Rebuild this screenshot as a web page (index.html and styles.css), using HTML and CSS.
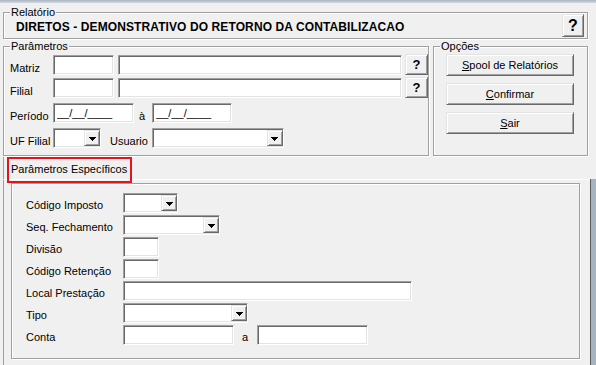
FILE: index.html
```html
<!DOCTYPE html>
<html>
<head>
  <meta charset="utf-8">
  <title>Diretos - Demonstrativo do Retorno da Contabilizacao</title>
  <link rel="stylesheet" href="styles.css">
</head>
<body>
  <div class="frame-top"></div>
  <div class="window">

    <div class="group report">
      <span class="legend">Relatório</span>
      <div class="report-title">DIRETOS - DEMONSTRATIVO DO RETORNO DA CONTABILIZACAO</div>
      <button class="raised help-big">?</button>
    </div>

    <div class="middle">
      <div class="group params">
        <span class="legend">Parâmetros</span>

        <div class="row row-a">
          <span class="lbl">Matriz</span>
          <input class="field w-code" type="text">
          <input class="field w-name" type="text">
          <button class="raised help">?</button>
        </div>

        <div class="row row-b">
          <span class="lbl">Filial</span>
          <input class="field w-code" type="text">
          <input class="field w-name" type="text">
          <button class="raised help">?</button>
        </div>

        <div class="row row-c">
          <span class="lbl">Período</span>
          <input class="field w-date" type="text" value="__/__/____">
          <span class="sep">à</span>
          <input class="field w-date2" type="text" value="__/__/____">
        </div>

        <div class="row row-c">
          <span class="lbl">UF Filial</span>
          <div class="field combo w-uf"><span class="raised combo-btn"><svg width="7" height="4" viewBox="0 0 7 4"><path d="M0 0h7v1h-1v1h-1v1h-1v1h-1v-1h-1v-1h-1v-1h-1z"/></svg></span></div>
          <span class="lbl-inline">Usuario</span>
          <div class="field combo w-user"><span class="raised combo-btn"><svg width="7" height="4" viewBox="0 0 7 4"><path d="M0 0h7v1h-1v1h-1v1h-1v1h-1v-1h-1v-1h-1v-1h-1z"/></svg></span></div>
        </div>
      </div>

      <div class="group options">
        <span class="legend">Opções</span>
        <button class="raised action"><u>S</u>pool de Relatórios</button>
        <button class="raised action"><u>C</u>onfirmar</button>
        <button class="raised action"><u>S</u>air</button>
      </div>
    </div>

    <div class="tabs">
      <div class="tab-strip">
        <div class="tab-label">Parâmetros Específicos</div>
      </div>
      <div class="tab-body">
        <div class="page">
          <div class="group inner">
            <div class="row">
              <span class="lbl">Código Imposto</span>
              <div class="field combo w-imp"><span class="raised combo-btn"><svg width="7" height="4" viewBox="0 0 7 4"><path d="M0 0h7v1h-1v1h-1v1h-1v1h-1v-1h-1v-1h-1v-1h-1z"/></svg></span></div>
            </div>
            <div class="row">
              <span class="lbl">Seq. Fechamento</span>
              <div class="field combo w-seq"><span class="raised combo-btn"><svg width="7" height="4" viewBox="0 0 7 4"><path d="M0 0h7v1h-1v1h-1v1h-1v1h-1v-1h-1v-1h-1v-1h-1z"/></svg></span></div>
            </div>
            <div class="row">
              <span class="lbl">Divisão</span>
              <input class="field w-small" type="text">
            </div>
            <div class="row">
              <span class="lbl">Código Retenção</span>
              <input class="field w-small" type="text">
            </div>
            <div class="row">
              <span class="lbl">Local Prestação</span>
              <input class="field w-local" type="text">
            </div>
            <div class="row">
              <span class="lbl">Tipo</span>
              <div class="field combo w-tipo"><span class="raised combo-btn"><svg width="7" height="4" viewBox="0 0 7 4"><path d="M0 0h7v1h-1v1h-1v1h-1v1h-1v-1h-1v-1h-1v-1h-1z"/></svg></span></div>
            </div>
            <div class="row">
              <span class="lbl">Conta</span>
              <input class="field w-conta" type="text">
              <span class="sep sep-a">a</span>
              <input class="field w-conta" type="text">
            </div>
          </div>
        </div>
        <div class="edge"></div>
      </div>
    </div>

  </div>
</body>
</html>
```

FILE: styles.css
```css
body {
  margin: 0;
  width: 596px;
  height: 365px;
  overflow: hidden;
  background: #f0f0f0;
  color: #000;
  font: 11px "Liberation Sans", Arial, sans-serif;
}

.frame-top {
  height: 3px;
  background: linear-gradient(#a9b4c1, #d3d9e0);
}

.window {
  padding: 9px 0 0 3px;
}

/* etched group box */
.group {
  position: relative;
  box-sizing: border-box;
  border: 1px solid #a0a0a0;
  box-shadow: inset 1px 1px 0 #fff, 1px 1px 0 #fff;
}

.legend {
  position: absolute;
  top: -7px;
  left: 6px;
  padding: 0 1px;
  background: #f0f0f0;
  line-height: 13px;
}

/* 3d bits */
.raised {
  box-sizing: border-box;
  margin: 0;
  padding: 0;
  background: #f0f0f0;
  border: 1px solid;
  border-color: #e3e3e3 #696969 #696969 #e3e3e3;
  box-shadow: inset 1px 1px 0 #fff, inset -1px -1px 0 #a0a0a0;
  font: inherit;
  color: #000;
}

.field {
  box-sizing: border-box;
  height: 20px;
  margin: 0;
  padding: 0 3px;
  background: #fff;
  border: 1px solid;
  border-color: #a0a0a0 #fff #fff #a0a0a0;
  box-shadow: inset 1px 1px 0 #696969, inset -1px -1px 0 #e3e3e3;
  font: inherit;
  color: #000;
  outline: none;
}

.combo {
  display: flex;
  justify-content: flex-end;
  padding: 1px 0;
}

.combo-btn {
  display: flex;
  align-items: center;
  justify-content: center;
  width: 16px;
  height: 16px;
  padding-top: 1px;
}

.combo-btn svg {
  display: block;
  shape-rendering: crispEdges;
}

/* Relatorio */
.report {
  display: flex;
  align-items: flex-start;
  width: 585px;
  height: 27px;
  padding: 1px 3px 0 12px;
}

.report-title {
  flex: 1;
  padding-top: 6px;
  font-size: 12px;
  font-weight: bold;
  letter-spacing: 0.1px;
  line-height: 14px;
}

.help-big {
  width: 22px;
  height: 23px;
  font-size: 16px;
  font-weight: bold;
  line-height: 18px;
}

/* Parametros / Opcoes */
.middle {
  display: flex;
  gap: 4px;
  margin-top: 7px;
}

.params {
  display: flex;
  flex-direction: column;
  width: 426px;
  height: 110px;
  padding: 7px 0 0 6px;
}

.row {
  display: flex;
  align-items: flex-end;
}

.row-a { height: 21px; }
.row-b { height: 23px; }
.row-c { height: 25px; }

.lbl {
  flex-shrink: 0;
  width: 43px;
  line-height: 13px;
  white-space: nowrap;
}

.lbl-inline {
  margin: 0 4px 0 9px;
  line-height: 13px;
}

.sep {
  padding: 0 7px 0 5px;
  line-height: 13px;
}

.w-code { width: 61px; }
.w-name { width: 284px; margin-left: 4px; }
.w-date { width: 81px; }
.w-date2 { width: 80px; }
.w-uf { width: 48px; }
.w-user { width: 132px; }

.help {
  width: 23px;
  height: 21px;
  margin-left: 3px;
  font-size: 13px;
  font-weight: bold;
  line-height: 16px;
}

.options {
  display: flex;
  flex-direction: column;
  gap: 7px;
  width: 155px;
  height: 110px;
  padding: 7px 0 0 12px;
}

.action {
  width: 128px;
  height: 22px;
  line-height: 18px;
  text-align: center;
}

/* tab control */
.tabs {
  display: flex;
  flex-direction: column;
  height: 208px;
  margin: 1px 0 0 0;
}

.tab-strip {
  height: 22px;
  border-left: 1px solid #a0a0a0;
}

.tab-label {
  position: relative;
  z-index: 1;
  box-sizing: border-box;
  width: 125px;
  height: 26px;
  margin-left: 3px;
  padding: 4px 0 0 2px;
  border: 2px solid #e3141c;
  line-height: 13px;
  white-space: nowrap;
}

.tab-body {
  display: flex;
  flex: 1;
}

.page {
  flex: 1;
  padding: 3px 0 0 7px;
  border-left: 1px solid #a0a0a0;
  border-top: 1px solid #fff;
}

.edge {
  width: 5px;
  border-left: 1px solid #5b5b5b;
  background: #a8b3c0;
}

.inner {
  display: flex;
  flex-direction: column;
  gap: 2px;
  width: 569px;
  height: 176px;
  padding: 9px 0 0 14px;
}

.inner .row { height: 20px; }

.inner .lbl {
  width: 97px;
  padding-bottom: 1px;
}

.w-imp { width: 55px; }
.w-seq { width: 97px; }
.w-small { width: 36px; }
.w-local { width: 289px; }
.w-tipo { width: 125px; }
.w-conta { width: 111px; }

.sep-a {
  padding: 0 9px 1px 8px;
}
```
